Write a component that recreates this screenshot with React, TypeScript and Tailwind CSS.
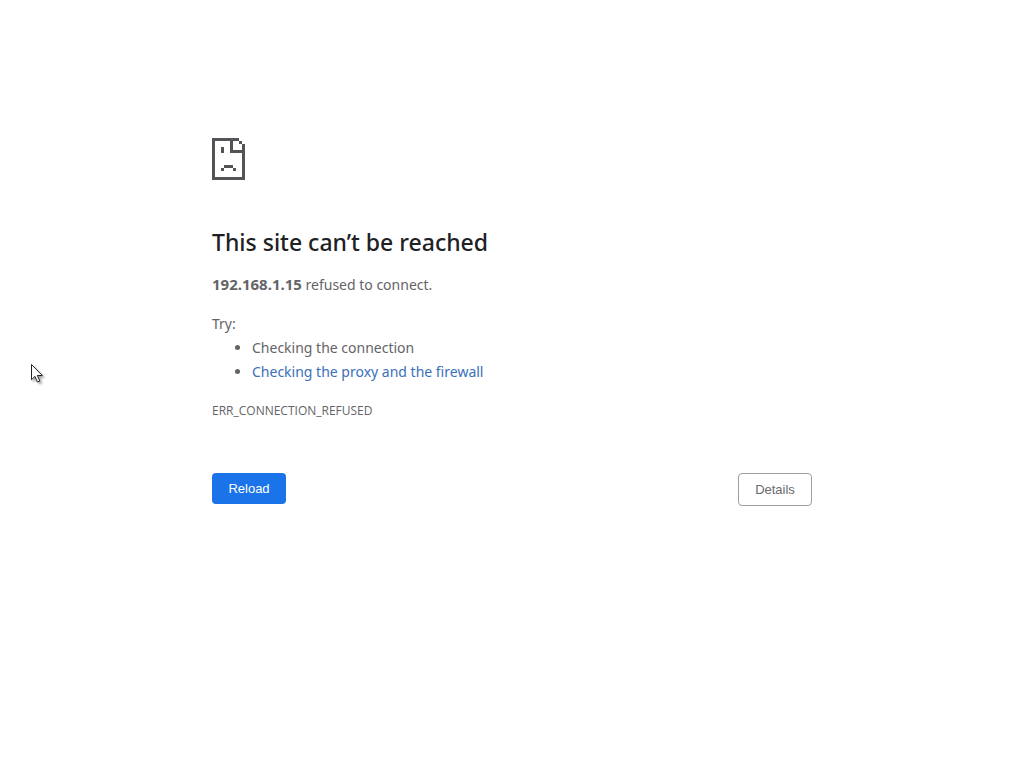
const suggestions = [
  { text: 'Checking the connection' },
  { text: 'Checking the proxy and the firewall', href: '#firewall' },
];

function SadPageIcon() {
  return (
    <svg
      className="block text-[#535457]"
      width="33"
      height="42"
      viewBox="0 0 11 14"
      fill="currentColor"
      shapeRendering="crispEdges"
      aria-hidden="true"
    >
      <path d="M0 0h9v1H7v3h4v10H0zM1 1v12h9V5H6V1z" fillRule="evenodd" />
      <path d="M9 1h1v1H9zM10 2h1v2h-1z" />
      <path d="M3 3h1v2H3zM4 9h3v1H4zM3 10h1v1H3zM7 10h1v1H7z" />
    </svg>
  );
}

function Cursor() {
  return (
    <svg
      className="absolute left-[30px] top-[363px] drop-shadow-[2px_2px_1px_rgba(0,0,0,0.35)]"
      width="14"
      height="21"
      viewBox="0 0 14 21"
      aria-hidden="true"
    >
      <path
        d="M1.5 1.5v15.2l3.5-3.3 2.4 5.6 2.4-1-2.4-5.5h4.9z"
        fill="#fff"
        stroke="#222"
        strokeWidth="1"
      />
    </svg>
  );
}

export default function App() {
  return (
    <div className="relative min-h-screen bg-white px-6 pt-[138px] font-['Noto_Sans',sans-serif] text-sm leading-6 text-[#646467]">
      <main className="mx-auto w-full max-w-[600px]">
        <SadPageIcon />

        <h1 className="mt-12 text-[23px] leading-7 font-medium text-[#202124]">
          This site can’t be reached
        </h1>

        <p className="mt-4">
          <strong className="text-[15px] font-bold">192.168.1.15</strong> refused to connect.
        </p>

        <p className="mt-[15px]">Try:</p>
        <ul className="list-disc pl-10">
          {suggestions.map((item) => (
            <li key={item.text}>
              {item.href ? (
                <a href={item.href} className="text-[#3b6fb9]">
                  {item.text}
                </a>
              ) : (
                item.text
              )}
            </li>
          ))}
        </ul>

        <p className="mt-[15px] font-['Open_Sans',sans-serif] text-xs leading-6">ERR_CONNECTION_REFUSED</p>

        <div className="mt-[50px] flex items-start justify-between font-['Liberation_Sans',sans-serif] text-[13px] leading-[15px]">
          <button type="button" className="min-w-[74px] rounded bg-[#1a73e8] px-4 py-2 text-white">
            Reload
          </button>
          <button type="button" className="min-w-[74px] rounded border border-[#9aa0a6] px-4 py-2 text-[#696a6d]">
            Details
          </button>
        </div>
      </main>

      <Cursor />
    </div>
  );
}
